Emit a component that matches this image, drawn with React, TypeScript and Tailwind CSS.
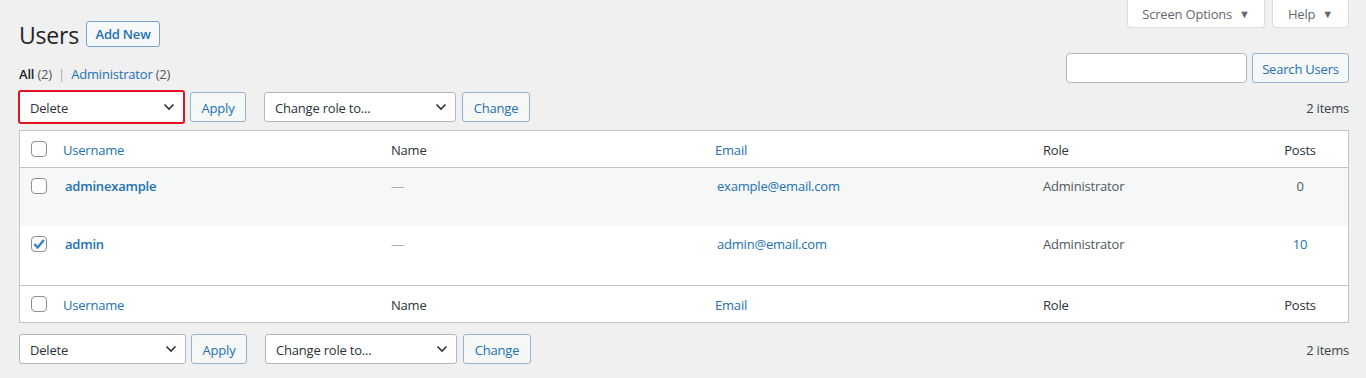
import React from "react";

const font = { fontFamily: '"Open Sans", "Noto Sans", sans-serif' };

function Chevron() {
  return (
    <svg width="12" height="8" viewBox="0 0 12 8" className="shrink-0">
      <path d="M1.5 1.5 L6 6 L10.5 1.5" fill="none" stroke="#2c3338" strokeWidth="1.6" />
    </svg>
  );
}

function Select({ label, width, red }: { label: string; width: string; red?: boolean }) {
  return (
    <div className={`${width} ${red ? "border-2 border-[#e0141e] h-[34px] -my-[2px] -ml-[1px] pl-[10px]" : "border border-[#b4b6ba] h-[30px] pl-[10px]"} rounded-[3px] bg-white flex items-center justify-between pr-[8px] text-[13px] text-[#2c3338]`}>
      <span className="pt-[3px]">{label}</span>
      <Chevron />
    </div>
  );
}

function Btn({ children, w }: { children: React.ReactNode; w: string }) {
  return (
    <div className={`${w} h-[30px] border border-[#92b2d2] rounded-[3px] bg-[#f6f7f7] text-[#2271b1] text-[13px] flex items-center justify-center pt-[3px]`}>
      {children}
    </div>
  );
}

function Checkbox({ checked }: { checked?: boolean }) {
  return (
    <div className="w-4 h-4 border border-[#8c8f94] rounded-[4px] bg-white flex items-center justify-center">
      {checked && (
        <svg width="14" height="14" viewBox="0 0 14 14">
          <path d="M2.3 7 L5.6 10.4 L11.8 3" fill="none" stroke="#3582c4" strokeWidth="2.4" />
        </svg>
      )}
    </div>
  );
}

function TableNav({ red }: { red?: boolean }) {
  return (
    <div className="flex items-center justify-between h-[30px]">
      <div className="flex items-center">
        <Select label="Delete" width="w-[167px]" red={red} />
        <div className="ml-[5px]"><Btn w="w-[56px]">Apply</Btn></div>
        <div className="ml-[18px]"><Select label="Change role to..." width="w-[192px]" /></div>
        <div className="ml-[6px]"><Btn w="w-[68px]">Change</Btn></div>
      </div>
      <div className="text-[13px] text-[#3c434a] pt-[3px]">2 items</div>
    </div>
  );
}

const grid = "grid grid-cols-[33px_328px_324px_328px_219px_1fr]";

function HeadRow({ top }: { top?: boolean }) {
  return (
    <div className={`${grid} h-[37px] items-center text-[13px] text-[#2c3338] ${top ? "border-b" : "border-t"} border-[#c3c4c7]`}>
      <div className="pl-[11px]"><Checkbox /></div>
      <div className="pl-[10px] pt-[3px] text-[#2271b1]">Username</div>
      <div className="pl-[10px] pt-[3px]">Name</div>
      <div className="pl-[10px] pt-[3px] text-[#2271b1]">Email</div>
      <div className="pl-[10px] pt-[3px]">Role</div>
      <div className="pt-[3px] text-center">Posts</div>
    </div>
  );
}

function Row({ user, email, posts, checked, alt }: { user: string; email: string; posts: string; checked?: boolean; alt?: boolean }) {
  return (
    <div className={`${grid} ${alt ? "bg-[#f6f7f7] h-[58px]" : "bg-white h-[59px]"} items-start text-[13px] text-[#50575e]`}>
      <div className="pl-[11px] pt-[10px]"><Checkbox checked={checked} /></div>
      <div className="pl-[12px] pt-[9px] font-semibold text-[#2271b1]">{user}</div>
      <div className="pl-[10px] pt-[9px] text-[#a7aaad]">—</div>
      <div className="pl-[12px] pt-[9px] text-[#2271b1]">{email}</div>
      <div className="pl-[10px] pt-[9px]">Administrator</div>
      <div className={`pt-[9px] text-center ${posts === "0" ? "text-[#50575e]" : "text-[#2271b1]"}`}>{posts}</div>
    </div>
  );
}

export default function App() {
  return (
    <div className="bg-[#f0f0f1] min-h-[378px] w-[1366px] pl-[19px] pr-[17px] tracking-[-0.2px]" style={font}>
      <div className="flex justify-between items-start h-[47px]">
        <div className="flex items-center pt-[21px]">
          <h1 className="text-[23px] h-[26px] leading-[28px] text-[#1d2327] font-normal">Users</h1>
          <div className="ml-[7px] h-[26px] w-[74px] border border-[#7aa3cb] rounded-[3px] bg-[#f6f7f7] text-[#2271b1] text-[13px] font-semibold flex items-center justify-center pt-[2px]">Add New</div>
        </div>
        <div className="flex gap-[7px]">
          <div className="w-[138px] h-[28px] bg-white border border-t-0 border-[#dcdcde] rounded-b-[4px] flex items-center justify-center text-[13px] text-[#646970] gap-[7px] pt-[2px]">
            Screen Options <span className="text-[11px]">▼</span>
          </div>
          <div className="w-[77px] h-[28px] bg-white border border-t-0 border-[#dcdcde] rounded-b-[4px] flex items-center justify-center text-[13px] text-[#646970] gap-[7px] pt-[2px]">
            Help <span className="text-[11px]">▼</span>
          </div>
        </div>
      </div>
      <div className="flex justify-between items-start mt-[6px] h-[30px]">
        <div className="pt-[12px] leading-[18px] text-[13px] text-[#50575e]">
          <span className="text-[#1d2327] font-semibold">All</span> (2) <span className="mx-[3px] text-[#a7aaad]">|</span> <span className="text-[#2271b1]">Administrator</span> (2)
        </div>
        <div className="flex gap-[5px]">
          <div className="w-[181px] h-[30px] bg-white border border-[#b4b6ba] rounded-[4px]" />
          <Btn w="w-[97px]">Search Users</Btn>
        </div>
      </div>
      <div className="mt-[9px]">
        <TableNav red />
      </div>
      <div className="mt-[8px] border border-[#c3c4c7] bg-white">
        <HeadRow top />
        <Row user="adminexample" email="example@email.com" posts="0" alt />
        <Row user="admin" email="admin@email.com" posts="10" checked />
        <HeadRow />
      </div>
      <div className="mt-[11px]">
        <TableNav />
      </div>
    </div>
  );
}
